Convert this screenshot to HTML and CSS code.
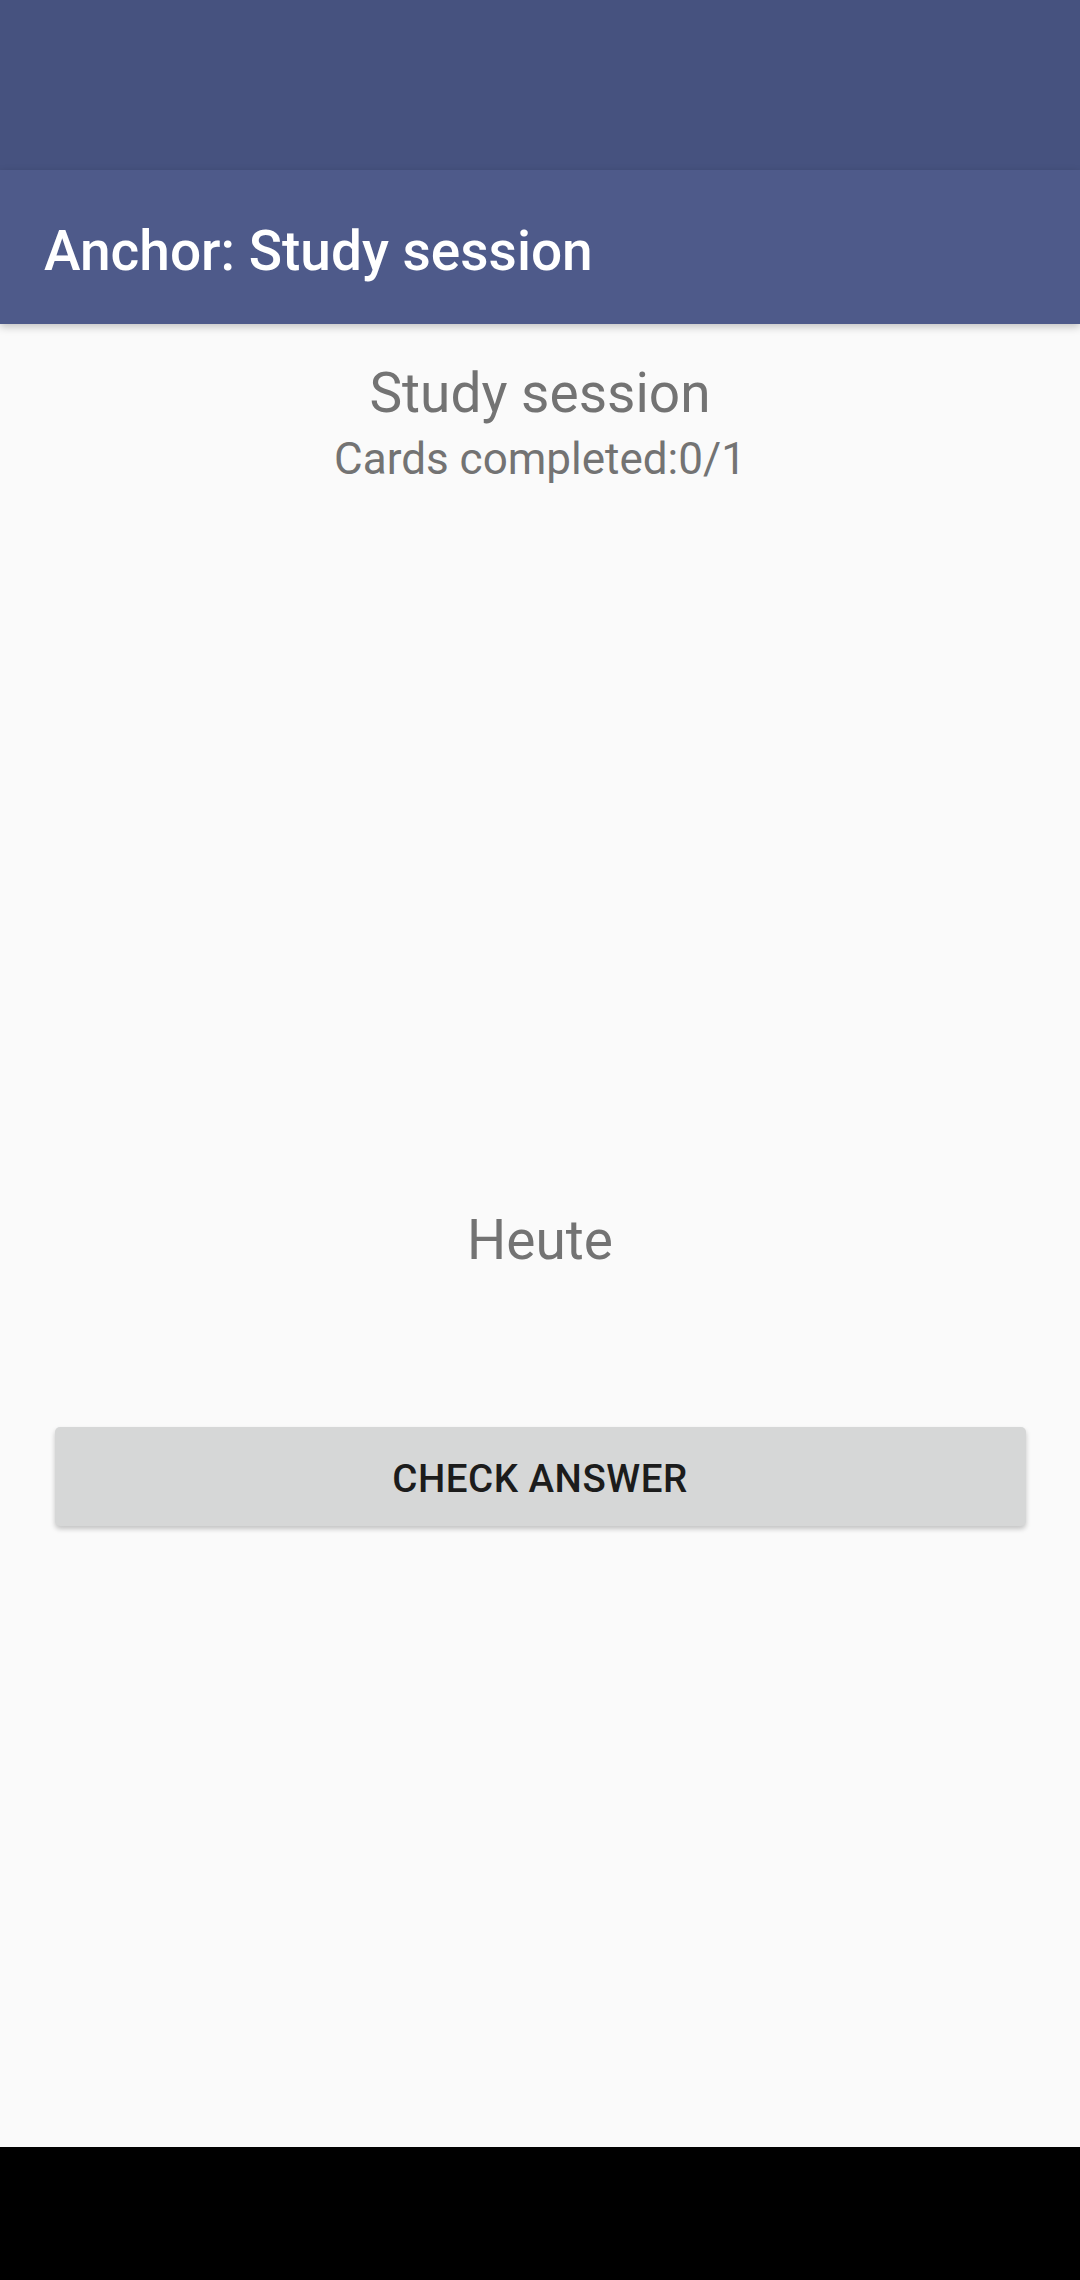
FILE: index.html
```html
<!DOCTYPE html>
<html>
<head>
<meta charset="utf-8">
<link rel="stylesheet" href="styles.css">
</head>
<body>
<div class="screen">
  <div class="status-bar"></div>
  <header class="app-bar">
    <h1 class="app-title">Anchor: Study session</h1>
  </header>
  <main class="content">
    <div class="session-title">Study session</div>
    <div class="session-progress">Cards completed:0/1</div>
    <div class="card-front">Heute</div>
    <button class="check-button">CHECK ANSWER</button>
  </main>
  <div class="nav-bar"></div>
</div>
</body>
</html>
```

FILE: styles.css
```css
html, body {
  margin: 0;
  padding: 0;
}
body {
  width: 1080px;
  height: 2280px;
  overflow: hidden;
  font-family: Roboto, "Noto Sans", sans-serif;
  background: #fafafa;
}
.screen {
  display: flex;
  flex-direction: column;
  height: 2280px;
}
.status-bar {
  height: 170px;
  background: #46527f;
  flex: none;
}
.app-bar {
  height: 154px;
  box-sizing: border-box;
  padding-top: 8px;
  background: #4e5a8a;
  flex: none;
  display: flex;
  align-items: center;
  padding-left: 44px;
  box-shadow: 0 3px 8px rgba(0,0,0,0.22);
  position: relative;
  z-index: 1;
}
.app-title {
  margin: 0;
  color: #ffffff;
  font-size: 55px;
  font-weight: 500;
  letter-spacing: 0;
}
.content {
  flex: 1;
  display: flex;
  flex-direction: column;
  align-items: center;
  background: #fafafa;
}
.session-title {
  margin-top: 37px;
  font-size: 55px;
  line-height: 64px;
  color: #737373;
}
.session-progress {
  margin-top: 8px;
  font-size: 44px;
  line-height: 52px;
  color: #737373;
}
.card-front {
  margin-top: 723px;
  font-size: 55px;
  line-height: 64px;
  color: #737373;
}
.check-button {
  margin-top: 155px;
  width: 971px;
  height: 99px;
  border: none;
  border-radius: 5px;
  background: #d6d7d7;
  color: #1c1c1c;
  font-family: Roboto, "Noto Sans", sans-serif;
  font-size: 38.5px;
  font-weight: 500;
  letter-spacing: 0.5px;
  box-shadow: 0 3px 5px rgba(0,0,0,0.22);
  padding: 4px 0 0 0;
}
.nav-bar {
  height: 133px;
  background: #000000;
  flex: none;
}
```
